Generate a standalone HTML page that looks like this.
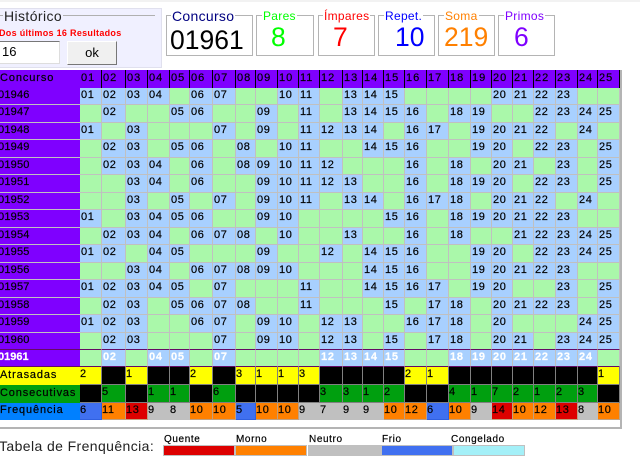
<!DOCTYPE html>
<html><head><meta charset="utf-8"><style>
html,body{margin:0;padding:0;background:#fff;width:640px;height:460px;overflow:hidden}
body{position:relative;font-family:"Liberation Sans",sans-serif;color:#000}
.a{position:absolute;white-space:nowrap}
.box{position:absolute;border:1px solid #b4b4b4;box-sizing:border-box;top:15px;height:41px;box-shadow:inset 0 0 0 1px #fff}
.t{position:absolute;white-space:nowrap;background:#fff;padding:0 1px;font-size:12px;letter-spacing:.3px;line-height:14px;top:9px}
.v{position:absolute;white-space:nowrap;font-size:26.5px;line-height:28px;top:23px}
table{position:absolute;left:0;top:70px;width:620px;table-layout:fixed;border-collapse:separate;border-spacing:0;font-size:11px;letter-spacing:.6px;line-height:12px;-webkit-text-stroke:.2px currentColor}
td{background:#aaf8aa;border-right:1px solid #c0c0c0;border-bottom:1px solid #c0c0c0;padding:0 0 3px 1px;overflow:hidden;white-space:nowrap;box-sizing:border-box}
td.b{background:#a8d0ff}
td.l{background:#7f00ff;padding-left:0;text-indent:-2px;border-right:0;font-size:11px;letter-spacing:.2px}
tr.h td{background:#7f00ff;border-right:1px solid #000;border-bottom:0;font-size:11px;letter-spacing:1px}
tr.h td.l{border-right:0;text-indent:0;letter-spacing:.9px}
tr.p td{border-bottom:1px solid #640a64}
tr.c td{color:#fff;font-weight:bold;border-bottom:1px solid #640a64;letter-spacing:.7px}
tr.c td.l{letter-spacing:0}
tr.s td{padding-left:0;border:1px solid #808080;border-left:0;border-top:0;background:#000}
tr.s td.l{border:0;text-indent:0;font-size:11px;letter-spacing:.85px}
tr.s td.y{background:#ff0}
tr.s td.n{background:#009f0f}
tr.s td.q{background:#c0c0c0;border-color:#c0c0c0}
tr.s td.o{background:#ff8000;border-color:#c0a080}
tr.s td.r{background:#dd0000;border-color:#c0a080}
tr.s td.u{background:#4070f0;border-color:#3060e0}
.bar{position:absolute;top:445px;height:11px;border:1px solid #c0c0c0;box-sizing:border-box}
.lg{position:absolute;top:434px;font-size:10px;line-height:12px;letter-spacing:.6px;white-space:nowrap;-webkit-text-stroke:.2px #000}
</style></head><body>
<div class="a" style="left:0;top:0;width:640px;height:2px;background:#f2f2f2"></div>
<div class="a" style="left:0;top:8px;width:162px;height:60px;background:#f0f0ff;border:1px solid #e0e0ee;border-left:0;box-sizing:border-box"></div>
<div class="a" style="left:-4px;top:15px;width:159px;height:1px;background:#b0b0b0"></div>
<div class="a" style="left:3px;top:9px;font-size:14px;line-height:14px;letter-spacing:.4px;background:#f0f0ff;padding:0 1px;color:#222">Histórico</div>
<div class="a" style="left:-1px;top:27px;font-size:9px;line-height:12px;letter-spacing:.3px;color:#f00;font-weight:bold">Dos últimos 16 Resultados</div>
<div class="a" style="left:-2px;top:41px;width:62px;height:23px;background:#fff;border:1px solid #777;border-right-color:#ddd;border-bottom-color:#ddd;box-sizing:border-box;font-size:13px;line-height:20px;padding-left:3px">16</div>
<div class="a" style="left:67px;top:41px;width:50px;height:24px;background:#f0f0f0;border:1px solid #fff;border-right-color:#777;border-bottom-color:#777;box-sizing:border-box;font-size:13px;line-height:22px;text-align:center">ok</div>

<div class="box" style="left:166px;width:87px"></div><div class="t" style="left:171px;font-size:14px;color:#000080;top:9px">Concurso</div><div class="v" style="left:170px;top:26px">01961</div>
<div class="box" style="left:256px;width:58px"></div><div class="t" style="left:262px;color:#00ff00">Pares</div><div class="v" style="left:271px;color:#00ff00">8</div>
<div class="box" style="left:318px;width:57px"></div><div class="t" style="left:323px;color:#f00">Ímpares</div><div class="v" style="left:333px;color:#f00">7</div>
<div class="box" style="left:378px;width:57px"></div><div class="t" style="left:384px;color:#0000ff">Repet.</div><div class="v" style="left:395px;color:#0000ff">10</div>
<div class="box" style="left:438px;width:57px"></div><div class="t" style="left:444px;color:#ff8000">Soma</div><div class="v" style="left:444px;color:#ff8000">219</div>
<div class="box" style="left:498px;width:57px"></div><div class="t" style="left:504px;color:#7f00ff">Primos</div><div class="v" style="left:514px;color:#7f00ff">6</div>

<div class="a" style="left:0;top:70px;width:622px;height:359px;border-right:2px solid #b4b4b4;border-bottom:2px solid #b4b4b4;box-sizing:border-box"></div>
<table>
<colgroup><col style="width:80px"><col style="width:22px"><col style="width:24px"><col style="width:22px"><col style="width:22px"><col style="width:20px"><col style="width:23px"><col style="width:23px"><col style="width:20px"><col style="width:22px"><col style="width:21px"><col style="width:21px"><col style="width:23px"><col style="width:20px"><col style="width:21px"><col style="width:21px"><col style="width:22px"><col style="width:22px"><col style="width:22px"><col style="width:21px"><col style="width:21px"><col style="width:21px"><col style="width:22px"><col style="width:22px"><col style="width:20px"><col style="width:22px"></colgroup>
<tr class="h" style="height:18px"><td class="l">Concurso<td>01<td>02<td>03<td>04<td>05<td>06<td>07<td>08<td>09<td>10<td>11<td>12<td>13<td>14<td>15<td>16<td>17<td>18<td>19<td>20<td>21<td>22<td>23<td>24<td>25</tr>
<tr style="height:17px"><td class="l">01946<td class="b">01<td class="b">02<td class="b">03<td class="b">04<td><td class="b">06<td class="b">07<td><td><td class="b">10<td class="b">11<td><td class="b">13<td class="b">14<td class="b">15<td><td><td><td><td class="b">20<td class="b">21<td class="b">22<td class="b">23<td><td></tr>
<tr style="height:18px"><td class="l">01947<td><td class="b">02<td><td><td class="b">05<td class="b">06<td><td><td class="b">09<td><td class="b">11<td><td class="b">13<td class="b">14<td class="b">15<td class="b">16<td><td class="b">18<td class="b">19<td><td><td class="b">22<td class="b">23<td class="b">24<td class="b">25</tr>
<tr style="height:17px"><td class="l">01948<td class="b">01<td><td class="b">03<td><td><td><td class="b">07<td><td class="b">09<td><td class="b">11<td class="b">12<td class="b">13<td class="b">14<td><td class="b">16<td class="b">17<td><td class="b">19<td class="b">20<td class="b">21<td class="b">22<td><td class="b">24<td></tr>
<tr style="height:18px"><td class="l">01949<td><td class="b">02<td class="b">03<td><td class="b">05<td class="b">06<td><td class="b">08<td><td class="b">10<td class="b">11<td><td><td class="b">14<td class="b">15<td class="b">16<td><td><td class="b">19<td class="b">20<td><td class="b">22<td class="b">23<td><td class="b">25</tr>
<tr style="height:17px"><td class="l">01950<td><td class="b">02<td class="b">03<td class="b">04<td><td class="b">06<td><td class="b">08<td class="b">09<td class="b">10<td class="b">11<td class="b">12<td><td><td><td class="b">16<td><td class="b">18<td><td class="b">20<td class="b">21<td><td class="b">23<td><td class="b">25</tr>
<tr style="height:18px"><td class="l">01951<td><td><td class="b">03<td class="b">04<td><td class="b">06<td><td><td class="b">09<td class="b">10<td class="b">11<td class="b">12<td class="b">13<td><td><td class="b">16<td><td class="b">18<td class="b">19<td class="b">20<td><td class="b">22<td class="b">23<td><td class="b">25</tr>
<tr style="height:17px"><td class="l">01952<td><td><td class="b">03<td><td class="b">05<td><td class="b">07<td><td class="b">09<td class="b">10<td class="b">11<td><td class="b">13<td class="b">14<td><td class="b">16<td class="b">17<td class="b">18<td><td class="b">20<td class="b">21<td class="b">22<td><td class="b">24<td></tr>
<tr style="height:18px"><td class="l">01953<td class="b">01<td><td class="b">03<td class="b">04<td class="b">05<td class="b">06<td><td><td class="b">09<td class="b">10<td><td><td><td><td class="b">15<td class="b">16<td><td class="b">18<td class="b">19<td class="b">20<td class="b">21<td class="b">22<td class="b">23<td><td></tr>
<tr style="height:17px"><td class="l">01954<td><td class="b">02<td class="b">03<td class="b">04<td><td class="b">06<td class="b">07<td class="b">08<td><td class="b">10<td><td><td class="b">13<td><td><td class="b">16<td><td class="b">18<td><td><td class="b">21<td class="b">22<td class="b">23<td class="b">24<td class="b">25</tr>
<tr style="height:18px"><td class="l">01955<td class="b">01<td class="b">02<td><td class="b">04<td class="b">05<td><td><td><td class="b">09<td><td><td class="b">12<td><td class="b">14<td class="b">15<td class="b">16<td><td><td class="b">19<td class="b">20<td><td class="b">22<td class="b">23<td class="b">24<td class="b">25</tr>
<tr style="height:17px"><td class="l">01956<td><td><td class="b">03<td class="b">04<td><td class="b">06<td class="b">07<td class="b">08<td class="b">09<td class="b">10<td><td><td><td class="b">14<td class="b">15<td class="b">16<td><td><td class="b">19<td class="b">20<td class="b">21<td class="b">22<td class="b">23<td><td></tr>
<tr style="height:18px"><td class="l">01957<td class="b">01<td class="b">02<td class="b">03<td class="b">04<td class="b">05<td><td class="b">07<td><td><td><td class="b">11<td><td><td class="b">14<td class="b">15<td class="b">16<td class="b">17<td><td class="b">19<td class="b">20<td><td><td class="b">23<td><td class="b">25</tr>
<tr style="height:17px"><td class="l">01958<td><td class="b">02<td class="b">03<td><td class="b">05<td class="b">06<td class="b">07<td class="b">08<td><td><td class="b">11<td><td><td><td class="b">15<td><td class="b">17<td class="b">18<td><td class="b">20<td class="b">21<td class="b">22<td class="b">23<td><td class="b">25</tr>
<tr style="height:18px"><td class="l">01959<td class="b">01<td class="b">02<td class="b">03<td><td><td class="b">06<td class="b">07<td><td class="b">09<td class="b">10<td><td class="b">12<td class="b">13<td><td><td class="b">16<td class="b">17<td class="b">18<td><td class="b">20<td><td><td><td class="b">24<td class="b">25</tr>
<tr class="p" style="height:17px"><td class="l">01960<td><td class="b">02<td class="b">03<td><td><td><td class="b">07<td><td class="b">09<td class="b">10<td><td class="b">12<td class="b">13<td><td class="b">15<td><td class="b">17<td class="b">18<td><td class="b">20<td class="b">21<td><td class="b">23<td class="b">24<td class="b">25</tr>
<tr class="c" style="height:17px"><td class="l">01961<td><td class="b">02<td><td class="b">04<td class="b">05<td><td class="b">07<td><td><td><td><td class="b">12<td class="b">13<td class="b">14<td class="b">15<td><td><td class="b">18<td class="b">19<td class="b">20<td class="b">21<td class="b">22<td class="b">23<td class="b">24<td></tr>
<tr class="s" style="height:18px"><td class="l" style="background:#ff0">Atrasadas<td class="y">2<td><td class="y">1<td><td><td class="y">2<td><td class="y">3<td class="y">1<td class="y">1<td class="y">3<td><td><td><td><td class="y">2<td class="y">1<td><td><td><td><td><td><td><td class="y">1</tr>
<tr class="s" style="height:18px"><td class="l" style="background:#009f0f">Consecutivas<td><td class="n">5<td><td class="n">1<td class="n">1<td><td class="n">6<td><td><td><td><td class="n">3<td class="n">3<td class="n">1<td class="n">2<td><td><td class="n">4<td class="n">1<td class="n">7<td class="n">2<td class="n">1<td class="n">2<td class="n">3<td></tr>
<tr class="s" style="height:17px"><td class="l" style="background:#0080ff">Frequência<td class="u">6<td class="o">11<td class="r">13<td class="q">9<td class="q">8<td class="o">10<td class="o">10<td class="u">5<td class="o">10<td class="o">10<td class="q">9<td class="q">7<td class="q">9<td class="q">9<td class="o">10<td class="o">12<td class="u">6<td class="o">10<td class="q">9<td class="r">14<td class="o">10<td class="o">12<td class="r">13<td class="q">8<td class="o">10</tr>
</table>

<div class="a" style="left:-1px;top:437px;font-size:14px;line-height:18px;letter-spacing:.4px;color:#222">Tabela de Frenquência:</div>
<div class="lg" style="left:164px">Quente</div><div class="bar" style="left:163px;width:72px;background:#dd0000"></div>
<div class="lg" style="left:236px">Morno</div><div class="bar" style="left:235px;width:72px;background:#ff8000"></div>
<div class="lg" style="left:309px">Neutro</div><div class="bar" style="left:308px;width:73px;background:#c0c0c0"></div>
<div class="lg" style="left:382px">Frio</div><div class="bar" style="left:381px;width:72px;background:#4070f0"></div>
<div class="lg" style="left:451px">Congelado</div><div class="bar" style="left:453px;width:72px;background:#a4f0f8"></div>
</body></html>
